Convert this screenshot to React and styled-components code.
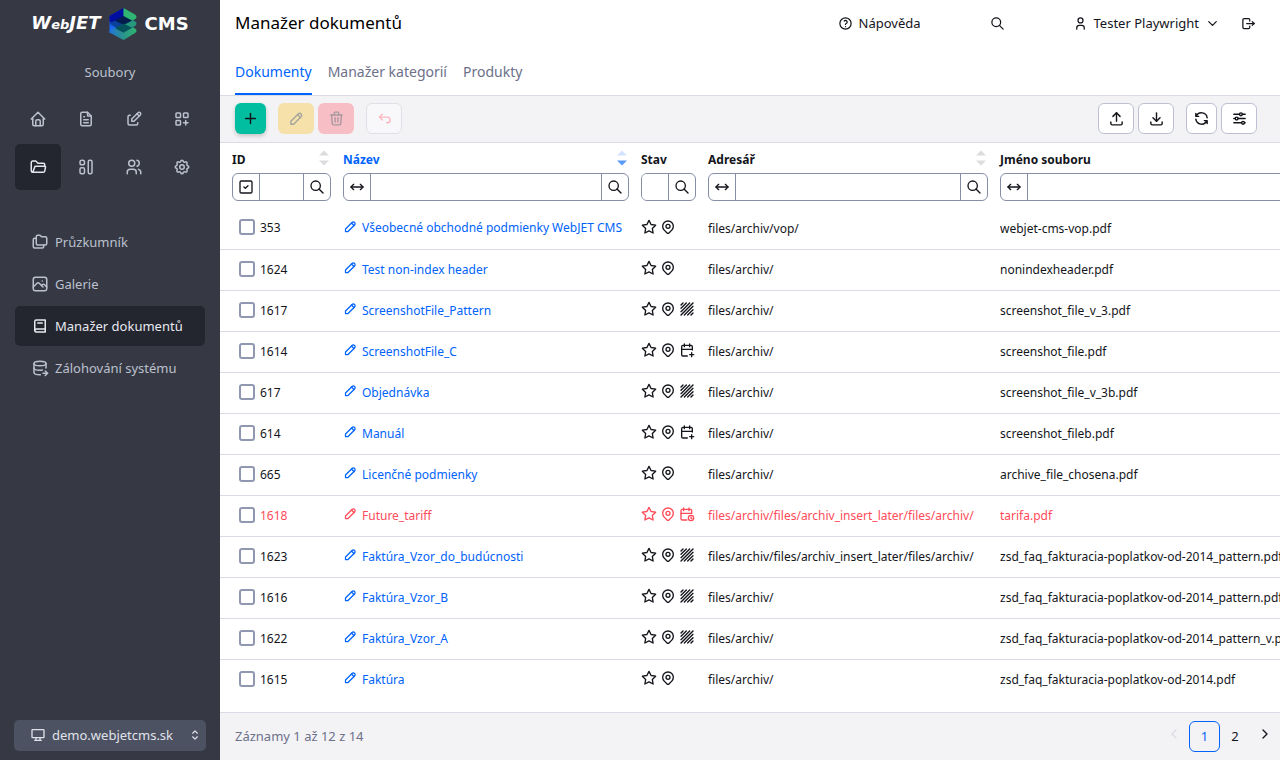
import React from 'react';
import styled, { createGlobalStyle, css } from 'styled-components';
import {
  TbHome, TbFileText, TbEdit, TbLayoutGridAdd, TbFolderOpen, TbUsers, TbSettings,
  TbFolders, TbPhoto, TbBook2, TbDatabaseExport, TbDeviceDesktop, TbSelector,
  TbHelp, TbSearch, TbUser, TbChevronDown, TbLogout, TbPlus, TbPencil, TbTrash,
  TbArrowBackUp, TbUpload, TbDownload, TbRefresh, TbAdjustmentsHorizontal,
  TbSquareCheck, TbArrowsHorizontal, TbStar, TbMapPin, TbTexture, TbCalendarPlus,
  TbCalendarTime, TbChevronLeft, TbChevronRight,
} from 'react-icons/tb';

const color = {
  ink: '#13151b',
  blue: '#0063fb',
  red: '#ff4b58',
  grey: '#6c7089',
  line: '#dadbe5',
  field: '#868ea5',
  panel: '#f3f3f6',
  side: '#363943',
  sideActive: '#23252f',
  sideText: '#bcc0cf',
};

const GlobalStyle = createGlobalStyle`
  *, *::before, *::after { box-sizing: border-box; }
  body { margin: 0; }
  body, button, input, select {
    font-family: "Noto Sans", "Open Sans", sans-serif;
    font-size: 12px;
    color: ${color.ink};
  }
  button { padding: 0; border: 0; background: none; cursor: pointer; }
  a { color: inherit; text-decoration: none; }
  svg { display: block; flex: none; }
`;

const Shell = styled.div`
  display: grid;
  grid-template-columns: 220px minmax(0, 1fr);
  min-height: 100vh;
`;

/* ---------- sidebar ---------- */

const Sidebar = styled.aside`
  display: flex;
  flex-direction: column;
  background: ${color.side};
  color: ${color.sideText};
  padding-bottom: 9px;
`;

const Brand = styled.a`
  display: flex;
  align-items: center;
  justify-content: center;
  gap: 8px;
  height: 48px;
  color: #fff;
  font-family: "DejaVu Sans", sans-serif;
  font-weight: 700;
  font-size: 18px;
  line-height: 20px;
`;

const BrandName = styled.span`
  font-style: italic;
  small { font-size: 13px; }
`;

const SectionName = styled.h2`
  margin: 0;
  font-size: 13px;
  font-weight: 400;
  line-height: 48px;
  text-align: center;
`;

const TileGrid = styled.nav`
  display: grid;
  grid-template-columns: repeat(4, 1fr);
  gap: 2px;
  padding: 0 15px;
`;

const Tile = styled.a`
  display: flex;
  align-items: center;
  justify-content: center;
  height: 46px;
  border-radius: 5px;
  font-size: 18px;
  background: ${(p) => (p.$active ? color.sideActive : 'transparent')};
  color: ${(p) => (p.$active ? '#e6e8f0' : 'inherit')};
`;

const Menu = styled.nav`
  display: flex;
  flex-direction: column;
  gap: 2px;
  padding: 32px 15px;
`;

const MenuItem = styled.a`
  display: flex;
  align-items: center;
  gap: 6px;
  height: 40px;
  padding-left: 16px;
  border-radius: 5px;
  font-size: 13px;
  background: ${(p) => (p.$active ? color.sideActive : 'transparent')};
  color: ${(p) => (p.$active ? '#e8e9f0' : 'inherit')};
  svg { font-size: 18px; }
`;

const DomainPicker = styled.label`
  display: flex;
  align-items: center;
  gap: 6px;
  height: 31px;
  margin: auto 14px 0;
  padding: 0 4px 1px 16px;
  border-radius: 5px;
  background: #4d5262;
  color: #e0e2ea;
  font-size: 16px;
  select {
    flex: 1;
    min-width: 0;
    padding: 0;
    border: 0;
    appearance: none;
    background: transparent;
    color: inherit;
    font-size: 13px;
  }
  svg:last-child { font-size: 14px; }
`;

/* ---------- header ---------- */

const Main = styled.main`
  display: flex;
  flex-direction: column;
  background: #fff;
`;

const Header = styled.header`
  display: flex;
  align-items: center;
  height: 48px;
  padding: 0 24px 2px 15px;
`;

const Title = styled.h1`
  flex: 1;
  margin: 0;
  font-size: 17px;
  font-weight: 400;
  line-height: 24px;
  color: #000;
`;

const HeaderTools = styled.div`
  display: flex;
  align-items: center;
`;

const HeaderAction = styled.button`
  display: flex;
  align-items: center;
  gap: 6px;
  margin-left: ${(p) => p.$before || 0}px;
  font-size: 13px;
  line-height: 24px;
  svg { font-size: 15px; }
`;

const Tabs = styled.nav`
  display: flex;
  gap: 16px;
  height: 48px;
  padding: 0 15px;
  border-bottom: 1px solid ${color.line};
`;

const Tab = styled.a`
  height: 47px;
  border-bottom: 2px solid ${(p) => (p.$active ? color.blue : 'transparent')};
  color: ${(p) => (p.$active ? color.blue : color.grey)};
  font-size: 14px;
  line-height: 47px;
`;

/* ---------- toolbar ---------- */

const Toolbar = styled.div`
  display: flex;
  align-items: center;
  justify-content: space-between;
  height: 47px;
  padding: 0 23px 1px 15px;
  background: ${color.panel};
  border-bottom: 1px solid ${color.line};
`;

const ToolGroups = styled.div`
  display: flex;
  gap: 12px;
`;

const ToolGroup = styled.div`
  display: flex;
  gap: 4px;
`;

const toolLooks = {
  add: css`background: #00be9f; color: #13151b; box-shadow: 0 2px 4px rgba(0, 0, 0, 0.2);`,
  edit: css`background: #f5e1a9; color: #a6a49f;`,
  remove: css`background: #f7bec5; color: #a99a9f;`,
  undo: css`background: #f8f8fa; color: #fbb7bf; border: 1px solid #e0e1e8;`,
  plain: css`background: #fff; color: #13151b; border: 1px solid #bcc0d1;`,
};

const ToolButton = styled.button`
  display: flex;
  align-items: center;
  justify-content: center;
  width: ${(p) => (p.$narrow ? 31 : 36)}px;
  height: 31px;
  border-radius: 6px;
  font-size: 17px;
  ${(p) => toolLooks[p.$look]}
`;

/* ---------- table ---------- */

const TableArea = styled.div`
  flex: 1;
  overflow: hidden;
`;

const DataTable = styled.table`
  width: max(100%, 1160px);
  table-layout: fixed;
  border-collapse: collapse;
`;

const HeadCell = styled.th`
  width: ${(p) => (p.$width ? `${p.$width}px` : 'auto')};
  height: 30px;
  padding: 4px 0 0 12px;
  text-align: left;
  font-weight: 700;
  line-height: 20px;
  color: ${(p) => (p.$sorted ? color.blue : color.ink)};
`;

const HeadLabel = styled.div`
  display: flex;
  align-items: center;
  justify-content: space-between;
  padding-right: 2px;
  svg { margin-bottom: 4px; }
`;

const FilterCell = styled.td`
  height: 35px;
  padding: 0 0 7px 12px;
`;

const Filter = styled.div`
  display: flex;
  height: 28px;
  border: 1px solid ${color.field};
  border-radius: 6px;
  overflow: hidden;
  && > * + * { border-left: 1px solid ${color.field}; }
`;

const FilterInput = styled.input`
  flex: 1;
  min-width: 0;
  padding: 0 6px;
  border: 0;
  background: #fff;
`;

const FilterButton = styled.button`
  display: flex;
  align-items: center;
  justify-content: center;
  flex: none;
  width: ${(p) => (p.$mode ? 26 : 27)}px;
  font-size: 16px;
`;

const Row = styled.tr`
  color: ${(p) => (p.$alert ? color.red : color.ink)};
  & + & { border-top: 1px solid ${color.line}; }
`;

const Cell = styled.td`
  height: 41px;
  padding: 0 0 0 12px;
  white-space: nowrap;
`;

const IdLine = styled.label`
  display: flex;
  align-items: center;
  gap: 5px;
  padding-left: 7px;
  line-height: 20px;
`;

const Tick = styled.input`
  appearance: none;
  width: 16px;
  height: 16px;
  margin: 0 0 2px;
  border: 2px solid #9097b0;
  border-radius: 3px;
  background: #fff;
`;

const NameLink = styled.a`
  display: flex;
  align-items: center;
  gap: 4px;
  line-height: 20px;
  color: ${(p) => (p.$alert ? color.red : color.blue)};
  svg { font-size: 15px; margin-bottom: 4px; }
`;

const States = styled.div`
  display: flex;
  gap: 3px;
  padding-bottom: 3px;
  font-size: 16px;
`;

/* ---------- footer ---------- */

const Footer = styled.footer`
  display: flex;
  align-items: center;
  justify-content: space-between;
  height: 48px;
  padding: 0 0 0 15px;
  background: ${color.panel};
  border-top: 1px solid ${color.line};
  color: ${color.grey};
  font-size: 13px;
  line-height: 20px;
`;

const RecordCount = styled.span`
  padding-bottom: 2px;
`;

const Pager = styled.nav`
  display: flex;
  align-items: center;
`;

const PageButton = styled.button`
  display: flex;
  align-items: center;
  justify-content: center;
  width: ${(p) => (p.$current ? 31 : 30)}px;
  height: 31px;
  padding-bottom: ${(p) => (p.$step ? 5 : 1)}px;
  border-radius: 6px;
  font-size: ${(p) => (p.$step ? 16 : 13)}px;
  ${(p) => p.$current && css`border: 1px solid ${color.blue}; color: ${color.blue};`}
  &:disabled { color: #dadbe5; }
`;

/* ---------- drawings ---------- */

const LogoMark = () => (
  <svg width="28" height="32" viewBox="0 0 28 32" aria-hidden="true">
    <defs>
      <linearGradient id="left" x1="0" y1="0" x2="0" y2="1">
        <stop offset="0" stopColor="#0a1fae" />
        <stop offset="1" stopColor="#1f7cff" />
      </linearGradient>
      <linearGradient id="low" x1="0" y1="0" x2="1" y2="0">
        <stop offset="0" stopColor="#2273d8" />
        <stop offset="0.55" stopColor="#2a9685" />
        <stop offset="1" stopColor="#2fb573" />
      </linearGradient>
    </defs>
    <path d="M0.500 8 14.500 0v17l-14 8z" fill="url(#left)" />
    <path d="M0.500 8 14.500 0v12L6 16.500l-5.500-3z" fill="#000d9e" />
    <path d="M14.500 0 26 6.500q1.500 1 1.500 2.500t-1.500 2.200L14.500 17z" fill="#2fb573" />
    <path d="M0.500 15.500 6 12.500l8.500 4.500L24 12.200l2 1.200q1.500 1 1.500 2.200T26 18l-11.500 6.500z" fill="#0b3f9c" />
    <path d="M14.500 17 24 12.200l2 1.200q1.500 1 1.500 2.200T26 18l-11.500 6.500z" fill="#27987c" />
    <path d="M0.500 23.500 6 20l8.500 4.500L24 19.200l2 1.300q1.500 1 1.500 2.200T26 25l-10.500 6.500q-1 .5-2 0L0.500 24.500z" fill="url(#low)" />
    <path d="M6 12.500 14.500 8 23 12.500 14.500 17z" fill="#021c4c" />
    <path d="M6 20 14.500 15.500 23 19.700l-8.500 4.800z" fill="#05535a" />
  </svg>
);

const BlocksIcon = () => (
  <svg width="18" height="18" viewBox="0 0 24 24" fill="none" stroke="currentColor" strokeWidth="2" strokeLinecap="round" strokeLinejoin="round">
    <rect x="4" y="3" width="6" height="6" rx="2.500" />
    <rect x="4" y="13" width="6" height="8" rx="2" />
    <rect x="15" y="3" width="5" height="18" rx="2" />
  </svg>
);

const SortArrows = ({ down }) => (
  <svg width="10" height="16" viewBox="0 0 10 16" aria-hidden="true">
    <path d="M0 5.500 5 0.500l5 5z" fill={down ? '#d3e3fe' : '#dcdcdf'} />
    <path d="M0 10.500 5 15.500l5-5z" fill={down ? '#5b9afd' : '#dcdcdf'} />
  </svg>
);

/* ---------- data ---------- */

const tiles = [
  ['Úvod', TbHome], ['Stránky', TbFileText], ['Příspěvky', TbEdit], ['Aplikace', TbLayoutGridAdd],
  ['Soubory', TbFolderOpen], ['Šablony', BlocksIcon], ['Uživatelé', TbUsers], ['Nastavení', TbSettings],
];

const menu = [
  ['Průzkumník', TbFolders], ['Galerie', TbPhoto],
  ['Manažer dokumentů', TbBook2], ['Zálohování systému', TbDatabaseExport],
];

const columns = [
  { label: 'ID', width: 111, sort: true, mode: TbSquareCheck },
  { label: 'Název', width: 298, sort: true, sorted: true, mode: TbArrowsHorizontal },
  { label: 'Stav', width: 67 },
  { label: 'Adresář', width: 292, sort: true, mode: TbArrowsHorizontal },
  { label: 'Jméno souboru', sort: true, mode: TbArrowsHorizontal },
];

const stateIcons = { pattern: TbTexture, planned: TbCalendarPlus, waiting: TbCalendarTime };

const archive = 'files/archiv/';
const later = 'files/archiv/files/archiv_insert_later/files/archiv/';

const rows = [
  [353, 'Všeobecné obchodné podmienky WebJET CMS', null, 'files/archiv/vop/', 'webjet-cms-vop.pdf'],
  [1624, 'Test non-index header', null, archive, 'nonindexheader.pdf'],
  [1617, 'ScreenshotFile_Pattern', 'pattern', archive, 'screenshot_file_v_3.pdf'],
  [1614, 'ScreenshotFile_C', 'planned', archive, 'screenshot_file.pdf'],
  [617, 'Objednávka', 'pattern', archive, 'screenshot_file_v_3b.pdf'],
  [614, 'Manuál', 'planned', archive, 'screenshot_fileb.pdf'],
  [665, 'Licenčné podmienky', null, archive, 'archive_file_chosena.pdf'],
  [1618, 'Future_tariff', 'waiting', later, 'tarifa.pdf'],
  [1623, 'Faktúra_Vzor_do_budúcnosti', 'pattern', later, 'zsd_faq_fakturacia-poplatkov-od-2014_pattern.pdf'],
  [1616, 'Faktúra_Vzor_B', 'pattern', archive, 'zsd_faq_fakturacia-poplatkov-od-2014_pattern.pdf'],
  [1622, 'Faktúra_Vzor_A', 'pattern', archive, 'zsd_faq_fakturacia-poplatkov-od-2014_pattern_v.pdf'],
  [1615, 'Faktúra', null, archive, 'zsd_faq_fakturacia-poplatkov-od-2014.pdf'],
];

function Tool({ look, label, icon: Icon, narrow, disabled }) {
  return (
    <ToolButton type="button" $look={look} $narrow={narrow} aria-label={label} disabled={disabled}>
      <Icon />
    </ToolButton>
  );
}

function DocumentRow({ row }) {
  const [id, name, state, folder, file] = row;
  const alert = state === 'waiting';
  const StateIcon = stateIcons[state];
  return (
    <Row $alert={alert}>
      <Cell><IdLine><Tick type="checkbox" />{id}</IdLine></Cell>
      <Cell><NameLink href="#" $alert={alert}><TbPencil />{name}</NameLink></Cell>
      <Cell><States><TbStar /><TbMapPin />{StateIcon && <StateIcon />}</States></Cell>
      <Cell>{folder}</Cell>
      <Cell>{file}</Cell>
    </Row>
  );
}

export default function App() {
  return (
    <>
      <GlobalStyle />
      <Shell>
        <Sidebar>
          <Brand href="#">
            <BrandName>W<small>eb</small>JET</BrandName>
            <LogoMark />
            <span>CMS</span>
          </Brand>
          <SectionName>Soubory</SectionName>
          <TileGrid>
            {tiles.map(([label, Icon]) => (
              <Tile key={label} href="#" aria-label={label} $active={label === 'Soubory'}><Icon /></Tile>
            ))}
          </TileGrid>
          <Menu>
            {menu.map(([label, Icon]) => (
              <MenuItem key={label} href="#" $active={label === 'Manažer dokumentů'}><Icon />{label}</MenuItem>
            ))}
          </Menu>
          <DomainPicker>
            <TbDeviceDesktop />
            <select aria-label="Doména"><option>demo.webjetcms.sk</option></select>
            <TbSelector />
          </DomainPicker>
        </Sidebar>
        <Main>
          <Header>
            <Title>Manažer dokumentů</Title>
            <HeaderTools>
              <HeaderAction type="button"><TbHelp />Nápověda</HeaderAction>
              <HeaderAction type="button" $before={69} aria-label="Hledat"><TbSearch /></HeaderAction>
              <HeaderAction type="button" $before={68}><TbUser />Tester Playwright<TbChevronDown /></HeaderAction>
              <HeaderAction type="button" $before={21} aria-label="Odhlásit"><TbLogout /></HeaderAction>
            </HeaderTools>
          </Header>
          <Tabs>
            <Tab href="#" $active>Dokumenty</Tab>
            <Tab href="#">Manažer kategorií</Tab>
            <Tab href="#">Produkty</Tab>
          </Tabs>
          <Toolbar>
            <ToolGroups>
              <Tool look="add" label="Přidat" icon={TbPlus} narrow />
              <ToolGroup>
                <Tool look="edit" label="Upravit" icon={TbPencil} disabled />
                <Tool look="remove" label="Smazat" icon={TbTrash} disabled />
              </ToolGroup>
              <Tool look="undo" label="Zpět" icon={TbArrowBackUp} disabled />
            </ToolGroups>
            <ToolGroups>
              <ToolGroup>
                <Tool look="plain" label="Export" icon={TbUpload} />
                <Tool look="plain" label="Import" icon={TbDownload} />
              </ToolGroup>
              <ToolGroup>
                <Tool look="plain" label="Obnovit" icon={TbRefresh} narrow />
                <Tool look="plain" label="Nastavení tabulky" icon={TbAdjustmentsHorizontal} />
              </ToolGroup>
            </ToolGroups>
          </Toolbar>
          <TableArea>
            <DataTable>
              <thead>
                <tr>
                  {columns.map((c) => (
                    <HeadCell key={c.label} $width={c.width} $sorted={c.sorted}>
                      <HeadLabel>{c.label}{c.sort && <SortArrows down={c.sorted} />}</HeadLabel>
                    </HeadCell>
                  ))}
                </tr>
                <tr>
                  {columns.map(({ label, mode: Mode }) => (
                    <FilterCell key={label}>
                      <Filter>
                        {Mode && <FilterButton type="button" $mode aria-label="Způsob hledání"><Mode /></FilterButton>}
                        <FilterInput aria-label={label} />
                        <FilterButton type="button" aria-label="Hledat"><TbSearch /></FilterButton>
                      </Filter>
                    </FilterCell>
                  ))}
                </tr>
              </thead>
              <tbody>
                {rows.map((row) => <DocumentRow key={row[0]} row={row} />)}
              </tbody>
            </DataTable>
          </TableArea>
          <Footer>
            <RecordCount>Záznamy 1 až 12 z 14</RecordCount>
            <Pager>
              <PageButton type="button" $step disabled aria-label="Předchozí"><TbChevronLeft /></PageButton>
              <PageButton type="button" $current>1</PageButton>
              <PageButton type="button">2</PageButton>
              <PageButton type="button" $step aria-label="Další"><TbChevronRight /></PageButton>
            </Pager>
          </Footer>
        </Main>
      </Shell>
    </>
  );
}
